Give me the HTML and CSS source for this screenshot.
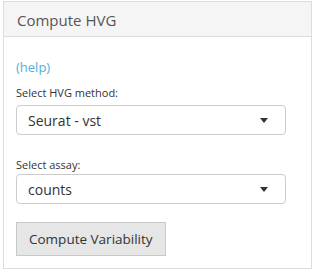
FILE: index.html
```html
<!DOCTYPE html>
<html lang="en">

<head>
  <meta charset="UTF-8">
  <meta name="viewport" content="width=device-width, initial-scale=1.0">
  <title>Compute HVG</title>
  <link rel="stylesheet" href="styles.css">
</head>

<body>
  <div class="panel">
    <div class="panel-heading">Compute HVG</div>

    <div class="panel-body">
      <a class="help-link" href="#">(help)</a>

      <!-- Metodo HVG -->
      <label class="field-label">Select HVG method:</label>
      <div class="select-box">
        <span class="select-value">Seurat - vst</span>
        <span class="select-caret"></span>
      </div>

      <!-- Assay -->
      <label class="field-label second">Select assay:</label>
      <div class="select-box">
        <span class="select-value">counts</span>
        <span class="select-caret"></span>
      </div>

      <button class="compute-button">Compute Variability</button>
    </div>
  </div>
</body>

</html>
```

FILE: styles.css
```css
/* Base */
body {
  font-family: 'Open Sans', 'DejaVu Sans', sans-serif;
  margin: 0;
  padding: 0;
  background: #fff;
  color: #333;
}

.panel {
  margin: 1px 5px 0 3px;
  border: 1px solid #ddd;
  background: #fff;
}

.panel-heading {
  background-color: #f5f5f5;
  border-bottom: 1px solid #ddd;
  padding: 8px 13px 6px;
  font-size: 15px;
  line-height: 20px;
  color: #555;
}

.panel-body {
  display: flex;
  flex-direction: column;
  align-items: flex-start;
  padding: 20px 12px 12px;
}

.help-link {
  font-size: 13px;
  line-height: 20px;
  color: #4fb3d9;
  text-decoration: none;
}

.field-label {
  font-size: 11px;
  line-height: 16px;
  margin-top: 8px;
  margin-bottom: 4px;
  color: #333;
}

.field-label.second {
  margin-top: 22px;
  margin-bottom: 1px;
}

.select-box {
  box-sizing: border-box;
  width: 270px;
  height: 30px;
  border: 1px solid #ccc;
  border-radius: 4px;
  padding: 1px 17px 0 11px;
  display: flex;
  align-items: center;
  justify-content: space-between;
  font-size: 14px;
  color: #333;
}

.select-caret {
  width: 0;
  height: 0;
  border-left: 4px solid transparent;
  border-right: 4px solid transparent;
  border-top: 5px solid #333;
}

.compute-button {
  margin-top: 18px;
  box-sizing: border-box;
  height: 34px;
  padding: 0 12px;
  font-family: 'Open Sans', 'DejaVu Sans', sans-serif;
  font-size: 13.5px;
  color: #333;
  background-color: #e6e6e6;
  border: 1px solid #c8c8c8;
  border-radius: 0;
}
```
